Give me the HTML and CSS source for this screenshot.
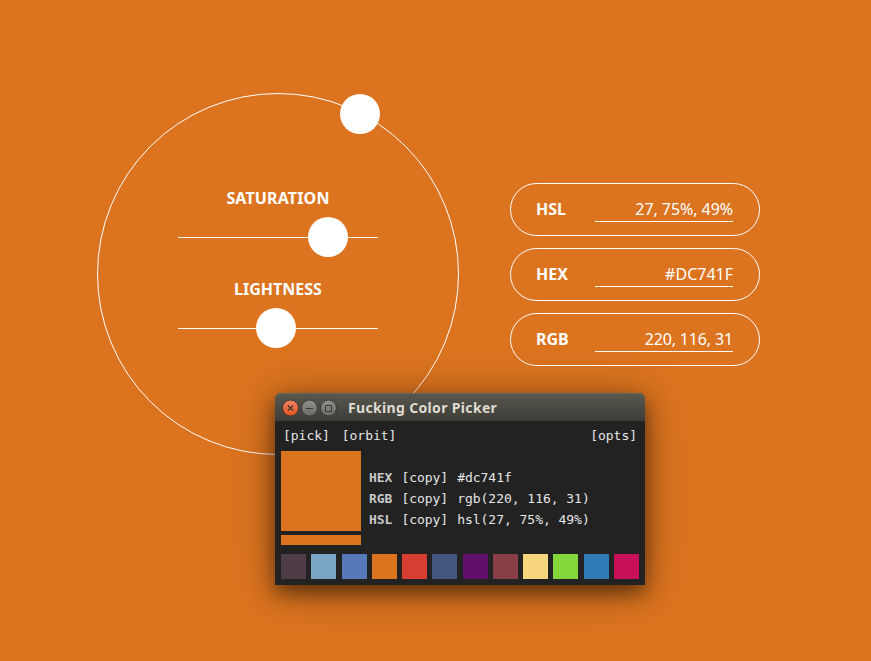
FILE: index.html
```html
<!DOCTYPE html>
<html lang="en">
<head>
<meta charset="utf-8">
<title>Color Picker</title>
<link rel="stylesheet" href="styles.css">
</head>
<body>
<main class="stage">
  <section class="wheel">
    <span class="knob hue-knob"></span>
    <div class="control">
      <h2 class="saturation-label">SATURATION</h2>
      <div class="slider"><span class="knob saturation-knob"></span></div>
    </div>
    <div class="control">
      <h2 class="lightness-label">LIGHTNESS</h2>
      <div class="slider"><span class="knob lightness-knob"></span></div>
    </div>
  </section>
  <section class="fields">
    <div class="field"><b class="hsl">HSL</b><span class="value hsl-value">27, 75%, 49%</span></div>
    <div class="field"><b class="hex">HEX</b><span class="value hex-value">#DC741F</span></div>
    <div class="field"><b class="rgb">RGB</b><span class="value rgb-value">220, 116, 31</span></div>
  </section>
</main>
<section class="window">
  <header class="titlebar">
    <svg class="buttons" width="56" height="18" viewBox="0 0 56 18">
      <defs>
        <linearGradient id="close" x2="0" y2="1"><stop stop-color="#f58663"/><stop offset="1" stop-color="#e3531f"/></linearGradient>
        <linearGradient id="plain" x2="0" y2="1"><stop stop-color="#92918a"/><stop offset="1" stop-color="#6b6a64"/></linearGradient>
      </defs>
      <g stroke="#383731">
        <circle cx="9.500" cy="9" r="8" fill="url(#close)"/>
        <circle cx="28.500" cy="9" r="8" fill="url(#plain)"/>
        <circle cx="47.500" cy="9" r="8" fill="url(#plain)"/>
        <g fill="none">
          <path stroke-width="1.2" d="M7 6.500l5 5M12 6.500l-5 5"/>
          <path d="M25 9.500h7"/>
          <path d="M44.500 6.500h6v6h-6z"/>
        </g>
      </g>
    </svg>
    <h1>Fucking Color Picker</h1>
  </header>
  <div class="menu"><span>[pick]</span><span>[orbit]</span><span class="options">[opts]</span></div>
  <div class="details">
    <div class="preview"><div class="current"></div><div class="previous"></div></div>
    <div class="codes">
      <div class="code"><b>HEX</b><span>[copy]</span><span>#dc741f</span></div>
      <div class="code"><b>RGB</b><span>[copy]</span><span>rgb(220, 116, 31)</span></div>
      <div class="code"><b>HSL</b><span>[copy]</span><span>hsl(27, 75%, 49%)</span></div>
    </div>
  </div>
  <div class="palette">
    <i class="plum"></i><i class="sky"></i><i class="blue"></i><i class="orange"></i><i class="red"></i><i class="slate"></i><i class="purple"></i><i class="maroon"></i><i class="yellow"></i><i class="green"></i><i class="ocean"></i><i class="pink"></i>
  </div>
</section>
</body>
</html>
```
FILE: styles.css
```css
* { box-sizing: border-box; }
html, body { height: 100%; }
body {
  margin: 0;
  position: relative;
  overflow: hidden;
  background: #dc741f;
  color: #fff;
  font-family: "Noto Sans", "Open Sans", sans-serif;
}
.stage { display: flex; padding: 93px 0 0 97px; gap: 51px; }
.wheel {
  position: relative;
  width: 362px;
  height: 362px;
  border: 1px solid #fff;
  border-radius: 50%;
  padding: 92px 80px 0;
}
.control { height: 91px; }
h1, h2 { margin: 0; white-space: nowrap; }
h2 { font-size: 16px; line-height: 24px; height: 31px; text-align: center; }
.saturation-label { letter-spacing: .15px; }
.slider {
  position: relative;
  height: 40px;
  background: linear-gradient(#fff, #fff) 0 20px / 100% 1px no-repeat;
}
.knob { position: absolute; width: 40px; height: 40px; border-radius: 50%; background: #fff; }
.hue-knob { left: 241.500px; top: -.5px; }
.saturation-knob { left: 130px; }
.lightness-knob { left: 78px; }
.fields { display: flex; flex-direction: column; gap: 12px; margin-top: 90px; }
.field {
  display: flex;
  justify-content: space-between;
  align-items: flex-start;
  width: 250px;
  height: 53px;
  border: 1px solid #fff;
  border-radius: 27px;
  padding: 13px 26px 0 25px;
  font-size: 16px;
  line-height: 24px;
}
.value {
  width: 138px;
  height: 25px;
  border-bottom: 1px solid #fff;
  text-align: right;
  white-space: nowrap;
}
.hsl-value { letter-spacing: -.06px; }
.rgb-value { letter-spacing: -.15px; }
.window {
  position: absolute;
  left: 275px;
  top: 393px;
  width: 370px;
  height: 192px;
  border-radius: 6px 6px 0 0;
  background: #222;
  color: #e6e6e6;
  box-shadow: 0 8px 20px rgba(0, 0, 0, .5), 0 4px 50px rgba(0, 0, 0, .28);
  font: 13px/21px "DejaVu Sans Mono", monospace;
  letter-spacing: -.03px;
}
.titlebar {
  display: flex;
  align-items: center;
  gap: 11px;
  height: 28px;
  padding: 1px 6px 0;
  border-radius: 6px 6px 0 0;
  background: linear-gradient(#59584f, #3e3d38);
  box-shadow: inset 0 1px #68675e;
}
h1 { font: bold 14px/20px "Noto Sans", sans-serif; color: #dfdbd2; letter-spacing: .34px; }
.menu { display: flex; gap: 12px; height: 30px; padding: 4px 8px; }
.options { margin-left: auto; }
.details { display: flex; gap: 8px; height: 103px; padding-left: 6px; }
.preview { display: flex; flex-direction: column; gap: 4px; width: 80px; }
.current { height: 80px; background: #dc741f; }
.previous { height: 10px; background: #dc741f; }
.codes { padding-top: 16px; }
.code { display: flex; gap: 9px; height: 21px; }
.codes b { color: #c8c8c8; }
.palette { display: flex; justify-content: space-between; padding: 0 6px; }
.palette i { width: 25px; height: 25px; }
.plum { background: #4e3c47; }
.sky { background: #78a5c4; }
.blue { background: #5779b9; }
.orange { background: #dc741f; }
.red { background: #d53e30; }
.slate { background: #44577f; }
.purple { background: #620f6a; }
.maroon { background: #873e47; }
.yellow { background: #f7d57c; }
.green { background: #83d73a; }
.ocean { background: #307bb5; }
.pink { background: #c81058; }
```
